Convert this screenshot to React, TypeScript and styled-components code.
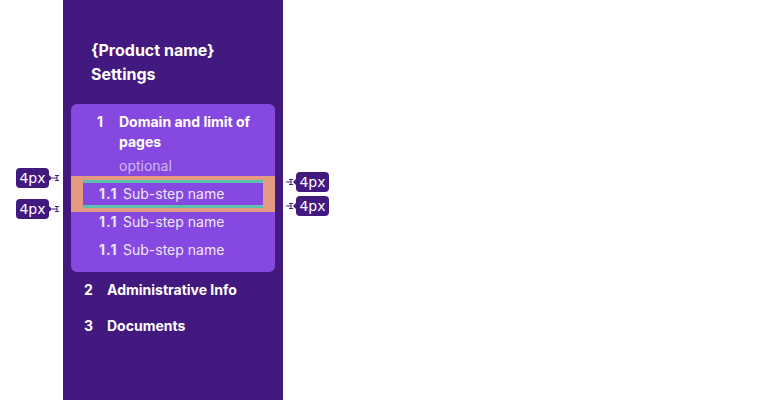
import React from "react";
import styled, { createGlobalStyle, css } from "styled-components";

const Global = createGlobalStyle`
  html, body { margin: 0; padding: 0; background: #ffffff; }
  body { font-family: Inter, "Noto Sans", "DejaVu Sans", sans-serif; -webkit-font-smoothing: antialiased; }
  * { box-sizing: border-box; }
`;

const DARK = "#42197e";
const CARD = "#8548e0";
const SALMON = "#e39a80";
const TEAL = "#5bc0ae";

const Page = styled.div`
  display: flex;
  height: 400px;
  padding-left: 63px;
`;

const Sidebar = styled.nav`
  width: 220px;
  height: 400px;
  background: ${DARK};
  padding: 38px 8px 0;
  display: flex;
  flex-direction: column;
`;

const Title = styled.h1`
  margin: 0 0 18px;
  padding-left: 20px;
  font-size: 16px;
  line-height: 24px;
  font-weight: 700;
  color: #ffffff;
`;

const Card = styled.div`
  position: relative;
  isolation: isolate;
  background: ${CARD};
  border-radius: 6px;
  padding: 8px 0 8px;
`;

const StepHeader = styled.div<{ $inset: number }>`
  display: grid;
  grid-template-columns: ${(p) => (p.$inset === 26 ? "22px" : "23px")} 1fr;
  padding: 0 12px 0 ${(p) => p.$inset}px;
  font-size: 14px;
  line-height: 20px;
  font-weight: 700;
  color: #ffffff;
`;

const Optional = styled.div`
  padding-left: 48px;
  margin: 4px 0;
  font-size: 14px;
  line-height: 20px;
  color: #d0b7f6;
`;

const SubRow = styled.div<{ $highlight?: boolean }>`
  position: relative;
  height: 28px;
  margin: 0 12px;
  padding-left: 16px;
  padding-bottom: 2px;
  display: flex;
  align-items: center;
  gap: 4px;
  font-size: 14px;
  color: #efe7fd;
  ${(p) =>
    p.$highlight &&
    css`
      padding-bottom: 1px;
      background: ${CARD};
      border-top: 3px solid ${TEAL};
      border-bottom: 3px solid ${TEAL};
      &::before {
        content: "";
        position: absolute;
        top: -7px;
        bottom: -7px;
        left: -12px;
        right: -12px;
        background: ${SALMON};
        z-index: -1;
      }
    `}
`;

const SubNum = styled.span`
  font-weight: 700;
  letter-spacing: 1px;
  width: 20px;
`;

const Step = styled.div`
  height: 36px;
  display: flex;
  align-items: center;
`;

const StepRow = styled(StepHeader)`
  width: 100%;
`;

const Annotation = styled.div<{ $left: number; $top: number; $reverse?: boolean }>`
  position: absolute;
  left: ${(p) => p.$left}px;
  top: ${(p) => p.$top}px;
  height: 20px;
  display: flex;
  flex-direction: ${(p) => (p.$reverse ? "row-reverse" : "row")};
  align-items: center;
`;

const Badge = styled.span`
  width: 33px;
  height: 20px;
  border-radius: 4px;
  background: ${DARK};
  color: #ffffff;
  font-family: "DejaVu Sans", Inter, sans-serif;
  font-size: 14px;
  line-height: 20px;
  text-align: center;
`;

const Pointer = styled.span<{ $dir: "left" | "right" }>`
  width: 0;
  height: 0;
  border-top: 3px solid transparent;
  border-bottom: 3px solid transparent;
  ${(p) =>
    p.$dir === "right"
      ? css`border-left: 3px solid ${DARK};`
      : css`border-right: 3px solid ${DARK};`}
`;

const Marker = () => (
  <svg width="7" height="6" viewBox="0 0 7 6" style={{ display: "block" }}>
    <path d="M0 3H5M3 0.5H7M3 5.5H7M5 0.5V5.5" stroke={DARK} strokeWidth="1" fill="none" />
  </svg>
);

const Measure: React.FC<{ left: number; top: number; side: "left" | "right" }> = ({ left, top, side }) => (
  <Annotation $left={left} $top={top} $reverse={side === "right"}>
    <Badge>4px</Badge>
    <Pointer $dir={side === "left" ? "right" : "left"} />
    <Marker />
  </Annotation>
);

const subSteps = ["Sub-step name", "Sub-step name", "Sub-step name"];

export default function App() {
  return (
    <>
      <Global />
      <Page>
        <Sidebar>
          <Title>
            {"{Product name}"}
            <br />
            Settings
          </Title>
          <Card>
            <StepHeader $inset={26}>
              <span>1</span>
              <span>Domain and limit of pages</span>
            </StepHeader>
            <Optional>optional</Optional>
            {subSteps.map((name, i) => (
              <SubRow key={i} $highlight={i === 0}>
                <SubNum>1.1</SubNum>
                <span>{name}</span>
                {i === 0 && (
                  <>
                    <Measure side="left" left={-67} top={-15} />
                    <Measure side="left" left={-67} top={16} />
                    <Measure side="right" left={203} top={-11} />
                    <Measure side="right" left={203} top={13} />
                  </>
                )}
              </SubRow>
            ))}
          </Card>
          <Step>
            <StepRow $inset={13}>
              <span>2</span>
              <span>Administrative Info</span>
            </StepRow>
          </Step>
          <Step>
            <StepRow $inset={13}>
              <span>3</span>
              <span>Documents</span>
            </StepRow>
          </Step>
        </Sidebar>
      </Page>
    </>
  );
}
